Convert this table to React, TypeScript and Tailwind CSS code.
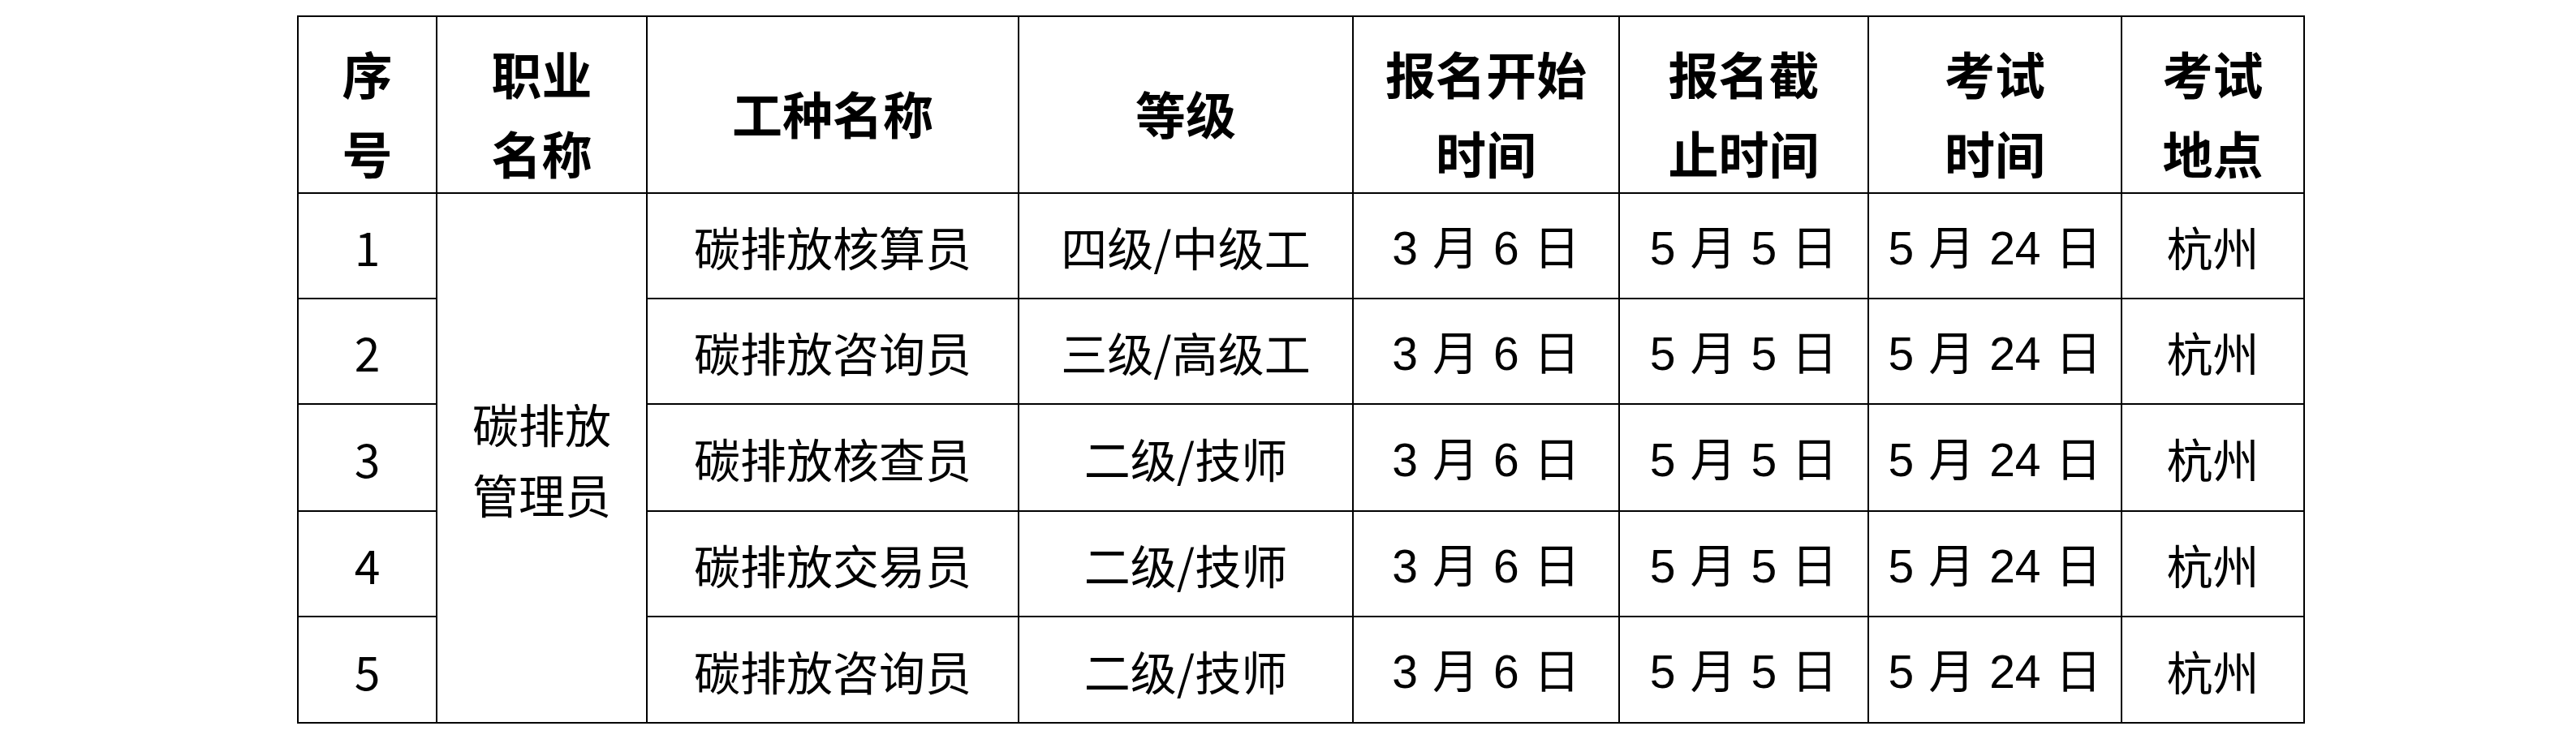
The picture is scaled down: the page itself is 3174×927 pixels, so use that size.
import React from 'react';

const cjk = "font-['Noto_Sans_CJK_SC',sans-serif]";

const rows = [
    { no: '1', job: '碳排放核算员', level: '四级/中级工' },
    { no: '2', job: '碳排放咨询员', level: '三级/高级工' },
    { no: '3', job: '碳排放核查员', level: '二级/技师' },
    { no: '4', job: '碳排放交易员', level: '二级/技师' },
    { no: '5', job: '碳排放咨询员', level: '二级/技师' },
];

const rowHeights = ['h-[130px]', 'h-[130px]', 'h-[132px]', 'h-[130px]', 'h-[131px]'];

function DateText({ m, d }: { m: string; d: string }) {
    return (
        <span className="inline-flex items-baseline gap-[18px]">
            <span className="font-['Liberation_Sans_Narrow','Liberation_Sans',sans-serif]">{m}</span>
            <span className={cjk}>月</span>
            <span className="font-['Liberation_Sans_Narrow','Liberation_Sans',sans-serif]">{d}</span>
            <span className={cjk}>日</span>
        </span>
    );
}

export default function App() {
    const th = `border-2 border-black text-center align-middle font-bold text-[62px] leading-[98px] p-0 pt-[20px] ${cjk} text-black`;
    const td = `border-2 border-black text-center align-middle text-[57px] leading-[70px] p-0 text-black ${cjk}`;

    return (
        <div className="min-h-screen bg-white pt-[19px] pl-[366px]">
            <table className="table-fixed border-collapse w-[2473px]">
                <colgroup>
                    <col className="w-[171px]" />
                    <col className="w-[259px]" />
                    <col className="w-[458px]" />
                    <col className="w-[412px]" />
                    <col className="w-[328px]" />
                    <col className="w-[307px]" />
                    <col className="w-[312px]" />
                    <col className="w-[225px]" />
                </colgroup>
                <thead>
                    <tr className="h-[217px]">
                        <th className={th}>序<br />号</th>
                        <th className={th}>职业<br />名称</th>
                        <th className={th}>工种名称</th>
                        <th className={th}>等级</th>
                        <th className={th}>报名开始<br />时间</th>
                        <th className={th}>报名截<br />止时间</th>
                        <th className={th}>考试<br />时间</th>
                        <th className={th}>考试<br />地点</th>
                    </tr>
                </thead>
                <tbody>
                    {rows.map((r, i) => (
                        <tr key={r.no} className={rowHeights[i]}>
                            <td className={`${td} font-['Liberation_Serif',serif]`}>{r.no}</td>
                            {i === 0 && (
                                <td rowSpan={5} className={`${td} leading-[87px]`}>
                                    碳排放<br />管理员
                                </td>
                            )}
                            <td className={td}>{r.job}</td>
                            <td className={td}>{r.level}</td>
                            <td className={td}><DateText m="3" d="6" /></td>
                            <td className={td}><DateText m="5" d="5" /></td>
                            <td className={td}><DateText m="5" d="24" /></td>
                            <td className={td}>杭州</td>
                        </tr>
                    ))}
                </tbody>
            </table>
        </div>
    );
}
